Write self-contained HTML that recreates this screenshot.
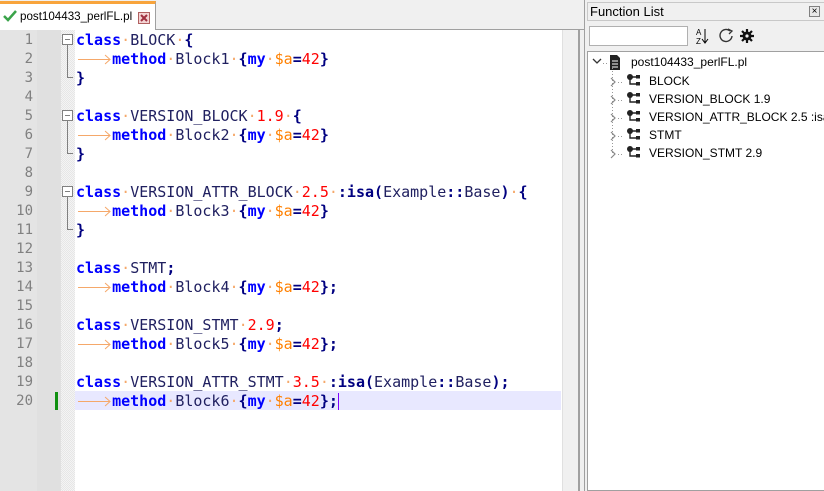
<!DOCTYPE html>
<html><head><meta charset="utf-8">
<style>
*{margin:0;padding:0;box-sizing:border-box}
body{width:824px;height:491px;overflow:hidden;background:#f0f0f0;font-family:"Liberation Sans",sans-serif;position:relative}
.tabbar{position:absolute;left:0;top:0;width:584px;height:30px;background:#f0f0f0;border-bottom:1px solid #a0a0a0}
.tab{position:absolute;left:0;top:1px;width:156px;height:29px;background:#fff;border-top:3px solid #f8a43c;border-right:1px solid #a0a0a0}
.tab span{position:absolute;left:20px;top:6px;font-size:11.6px;color:#000}
.editor{position:absolute;left:0;top:30px;width:562px;height:461px;background:#fff}
.ln{position:absolute;left:0;top:0;width:37px;height:461px;background:#e4e4e4}
.mg{position:absolute;left:37px;top:0;width:24px;height:461px;background:#e0e0e0}
.fold{position:absolute;left:61px;top:0;width:14px;height:461px;background-color:#f4f4f4;background-image:linear-gradient(45deg,#e6e6e6 25%,transparent 25%,transparent 75%,#e6e6e6 75%),linear-gradient(45deg,#e6e6e6 25%,transparent 25%,transparent 75%,#e6e6e6 75%);background-size:2px 2px;background-position:0 0,1px 1px}
.row{position:absolute;left:0;height:19px;width:562px;font-family:"DejaVu Sans Mono",monospace;font-size:15px;line-height:19px;white-space:pre}
.num{position:absolute;left:0;width:33px;text-align:right;color:#808080;font-size:14px}
.code{position:absolute;left:76px;color:#202060}
.k{color:#0000ff;font-weight:bold}
.b{color:#000080;font-weight:bold}
.n{color:#ff0000}
.v{color:#ff8000}
.d{color:#f5a86a}
.arr{display:inline-block;width:36.1px;height:19px;vertical-align:top}
.scroll{position:absolute;left:562px;top:30px;width:16px;height:461px;background:#f0f0f0;border-left:1px solid #e0e0e0}
.sep{position:absolute;left:578px;top:30px;width:2px;height:461px;background:#a0a0a0}
.panel{position:absolute;left:584px;top:0;width:240px;height:491px;background:#f0f0f0;border-left:1px solid #a0a0a0}
.title{position:absolute;left:2px;top:2px;width:238px;height:19px;border:1px solid #c8c8c8;font-size:13px;line-height:17px;padding-left:2px;color:#000}
.x{position:absolute;right:4px;top:3px;width:11px;height:11px;border:1px solid #808080;font-size:10px;line-height:9px;text-align:center;background:#e8e8e8}
.search{position:absolute;left:4px;top:26px;width:99px;height:20px;background:#fff;border:1px solid #b0b0b0}
.tree{position:absolute;left:2px;top:51px;width:238px;height:440px;background:#fff;border:1px solid #a0a0a0}
.item{position:absolute;font-size:12px;color:#000;white-space:nowrap}
</style></head><body>
<div class="tabbar"><div class="tab">
<svg style="position:absolute;left:3px;top:6px" width="14" height="12" viewBox="0 0 14 12"><path d="M1 6 L5 10 L13 1" stroke="#3aa34a" stroke-width="2.5" fill="none"/></svg>
<span>post104433_perlFL.pl</span>
<svg style="position:absolute;left:138px;top:8px" width="12" height="12" viewBox="0 0 12 12"><rect x="0.5" y="0.5" width="11" height="11" fill="#f4d4d4" stroke="#b06060"/><path d="M3 3L9 9M9 3L3 9" stroke="#a03040" stroke-width="2"/></svg>
</div></div>

<div class="editor">
<div class="ln"></div><div class="mg"></div><div class="fold"></div>
<div style="position:absolute;left:75px;top:361px;width:486px;height:19px;background:#e8e8ff"></div>
<div style="position:absolute;left:55px;top:362px;width:3px;height:18px;background:#109010"></div>
<svg style="position:absolute;left:61px;top:0" width="14" height="461">
<g fill="#fff" stroke="#808080" stroke-width="1">
<rect x="1.5" y="4.5" width="10" height="10"/><rect x="1.5" y="80.5" width="10" height="10"/><rect x="1.5" y="156.5" width="10" height="10"/></g>
<g stroke="#808080" fill="none"><path d="M4 9.5H9M4 85.5H9M4 161.5H9"/>
<path d="M6.5 15V47.5H12M6.5 91V123.5H12M6.5 167V199.5H12"/></g></svg>
<div id="rows"></div>
</div>

<div class="scroll"></div><div class="sep"></div>

<div class="panel">
<div class="title">Function List<div class="x">×</div></div>
<div class="search"></div>
<svg style="position:absolute;left:110px;top:27px" width="60" height="18" viewBox="0 0 60 18">
<text x="1" y="8" font-size="8" font-family="Liberation Sans">A</text><text x="1" y="17" font-size="8" font-family="Liberation Sans">Z</text>
<path d="M10 2V15M7 12L10 16L13 12" stroke="#000" fill="none"/>
<path d="M35 4A6 6 0 1 0 37 9" stroke="#333" stroke-width="1.4" fill="none"/><path d="M33 2L37 4L34 7" fill="none" stroke="#333" stroke-width="1.3"/>
<path d="M52 2V16M45 9H59M47 4L57 14M57 4L47 14" stroke="#111" stroke-width="2.2"/><circle cx="52" cy="9" r="4.5" fill="#111"/><circle cx="52" cy="9" r="1.6" fill="#f0f0f0"/>
</svg>
<div class="tree">
<svg style="position:absolute;left:0;top:0" width="50" height="120">
<path d="M5 7L9 11L13 7" stroke="#333" stroke-width="1.3" fill="none"/>
<path d="M15 11.5H21" stroke="#999" stroke-dasharray="1 2"/>
<path d="M22 3H29L32 6V18H22Z" fill="#222"/><path d="M24 9H30M24 12H30M24 15H30" stroke="#fff"/>
<path d="M24.5 16V102" stroke="#999" stroke-dasharray="1 2"/>
<g stroke="#888" stroke-width="1.2" fill="none">
<path d="M23 26L27 30L23 34"/><path d="M23 44L27 48L23 52"/><path d="M23 62L27 66L23 70"/><path d="M23 80L27 84L23 88"/><path d="M23 98L27 102L23 106"/></g>
</svg>
<div style="position:absolute;left:43px;top:3px;font-size:12px">post104433_perlFL.pl</div>
</div>
</div>

<script>
var E=document.getElementById('rows');
var arr='<svg class="arr" viewBox="0 0 36 19"><path d="M2 9.5H34M29 5L34 9.5L29 14" stroke="#f5a86a" fill="none"/></svg>';
var D='<span class="d">·</span>';
function b(s){return '<span class="b">'+s+'</span>'}
function k(s){return '<span class="k">'+s+'</span>'}
function n(s){return '<span class="n">'+s+'</span>'}
function m(i,semi){return arr+k('method')+D+'Block'+i+D+b('{')+k('my')+D+'<span class="v">$a</span>'+b('=')+n('42')+b('}')+(semi?b(';'):'')}
var L=[
k('class')+D+'BLOCK'+D+b('{'), m(1), b('}'), '',
k('class')+D+'VERSION_BLOCK'+D+n('1.9')+D+b('{'), m(2), b('}'), '',
k('class')+D+'VERSION_ATTR_BLOCK'+D+n('2.5')+D+b(':isa(')+'Example'+b('::')+'Base'+b(')')+D+b('{'), m(3), b('}'), '',
k('class')+D+'STMT'+b(';'), m(4,1), '',
k('class')+D+'VERSION_STMT'+D+n('2.9')+b(';'), m(5,1), '',
k('class')+D+'VERSION_ATTR_STMT'+D+n('3.5')+D+b(':isa(')+'Example'+b('::')+'Base'+b(');'), m(6,1)+'<span style="display:inline-block;width:1px;height:17px;background:#8000ff;vertical-align:top;margin-top:1px"></span>'
];
var h='';
for(var i=0;i<L.length;i++){h+='<div class="row" style="top:'+(i*19+1)+'px"><span class="num">'+(i+1)+'</span><span class="code">'+L[i]+'</span></div>';}
E.innerHTML=h;
var names=['BLOCK','VERSION_BLOCK 1.9','VERSION_ATTR_BLOCK 2.5 :isa(Ex','STMT','VERSION_STMT 2.9'];
var t=document.querySelector('.tree'),s='';
var svg='<svg style="position:absolute;left:0;top:0" width="60" height="120">';
for(var j=0;j<5;j++){var y=j*18;
s+='<div class="item" style="left:61px;top:'+(22+y)+'px">'+names[j]+'</div>';
svg+='<path d="M30 '+(30.5+y)+'H36" stroke="#999" stroke-dasharray="1 2"/><g fill="#222" transform="translate(0,'+y+')"><circle cx="42" cy="25" r="3"/><rect x="48" y="23" width="4" height="3.5"/><rect x="48" y="30" width="4" height="3.5"/><path d="M42 25V32H48M42 25H48" stroke="#222" stroke-width="1.4" fill="none"/></g>';}
svg+='</svg>';
t.insertAdjacentHTML('beforeend',s+svg);
</script>
</body></html>
